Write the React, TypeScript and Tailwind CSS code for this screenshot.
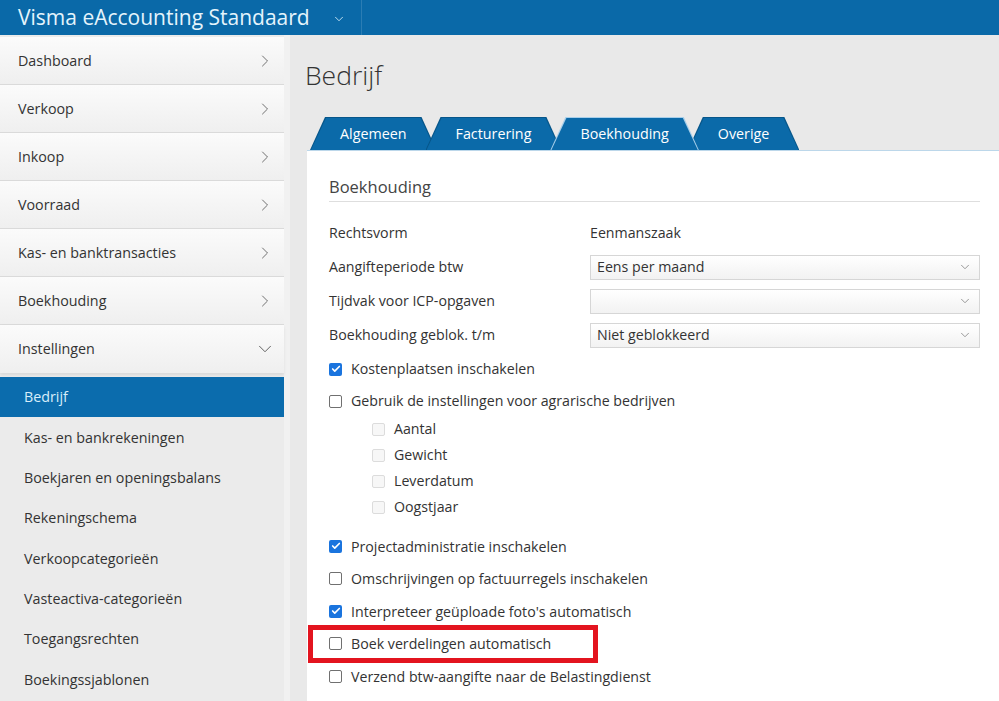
import { Check, ChevronDown, ChevronRight } from "lucide-react";

const topItems = ["Dashboard", "Verkoop", "Inkoop", "Voorraad", "Kas- en banktransacties", "Boekhouding"];

const subItems = [
  "Bedrijf",
  "Kas- en bankrekeningen",
  "Boekjaren en openingsbalans",
  "Rekeningschema",
  "Verkoopcategorieën",
  "Vasteactiva-categorieën",
  "Toegangsrechten",
  "Boekingssjablonen",
];

const tabs = ["Algemeen", "Facturering", "Boekhouding", "Overige"];

const Box = ({ state }: { state: "on" | "off" | "disabled" }) => {
  if (state === "on")
    return (
      <span className="flex h-[13px] w-[13px] items-center justify-center rounded-[2px] bg-[#1a74de]">
        <Check size={10} strokeWidth={4} className="text-white" />
      </span>
    );
  if (state === "disabled")
    return <span className="h-[13px] w-[13px] rounded-[2px] border border-[#dcdcdc] bg-[#f7f7f7]" />;
  return <span className="h-[13px] w-[13px] rounded-[2px] border border-[#707070] bg-white" />;
};

const CheckRow = ({ label, state, sub, h }: { label: string; state: "on" | "off" | "disabled"; sub?: boolean; h: string }) => (
  <div className={`flex items-center ${h} ${sub ? "pl-[43px]" : ""}`}>
    <Box state={state} />
    <span className="ml-[9px]">{label}</span>
  </div>
);

const Select = ({ value }: { value: string }) => (
  <div className="flex h-[25px] flex-1 items-center justify-between border border-[#d6d6d6] bg-gradient-to-b from-white to-[#f2f2f2] pl-[6px] pr-[7px]">
    <span>{value}</span>
    <ChevronDown size={14} strokeWidth={1.5} className="text-[#8a8a8a]" />
  </div>
);

const Tab = ({ label, active }: { label: string; active: boolean }) => (
  <div className={`relative -ml-[11px] flex h-[33px] items-center px-[30px] first:ml-0 ${active ? "z-10" : ""}`}>
    <div
      className={`absolute inset-0 [clip-path:polygon(15px_0,calc(100%_-_15px)_0,100%_100%,0_100%)] ${
        active ? "bg-[#a8cfea]" : "bg-[#07568a]"
      }`}
    />
    <div className="absolute top-[1px] right-[1px] bottom-0 left-[1px] bg-[#0b6aa9] [clip-path:polygon(15px_0,calc(100%_-_15px)_0,100%_100%,0_100%)]" />
    <span className="relative text-[14.3px] text-white">{label}</span>
  </div>
);

export default function App() {
  return (
    <div className="flex h-[701px] w-[999px] flex-col overflow-hidden bg-[#e9e9e9] font-['Open_Sans',sans-serif] text-[#333]">
      <div className="flex h-[35px] shrink-0 bg-[#0a69a8]">
        <div className="flex w-[362px] items-center border-r border-[#2b7db4] pl-[18px]">
          <span className="text-[21px] text-[#e4f4fc]">Visma eAccounting Standaard</span>
          <ChevronDown size={14} strokeWidth={1.5} className="ml-[22px] mt-[2px] text-[#d4ecf8]" />
        </div>
      </div>

      <div className="flex flex-1">
        <aside className="w-[290px] shrink-0 border-r-[6px] border-[#f1f1f1] bg-[#ebebeb] pt-[2px] text-[14.3px]">
          {topItems.map((item) => (
            <div
              key={item}
              className="flex h-[48px] items-center justify-between border-b border-[#dadada] bg-gradient-to-b from-[#fbfbfb] to-[#efefef] pl-[18px] pr-[9px]"
            >
              <span>{item}</span>
              <ChevronRight size={20} strokeWidth={1} className="text-[#555]" />
            </div>
          ))}
          <div className="flex h-[48px] items-center justify-between bg-gradient-to-b from-[#fbfbfb] to-[#efefef] pl-[18px] pr-[8px] shadow-[0_2px_3px_rgba(0,0,0,0.08)]">
            <span>Instellingen</span>
            <ChevronDown size={22} strokeWidth={1} className="text-[#555]" />
          </div>
          <div className="mt-[4px]">
            {subItems.map((item, i) => (
              <div
                key={item}
                className={`flex h-[40.3px] items-center pl-[24px] ${i === 0 ? "bg-[#0b6cad] text-[#d8eefa]" : ""}`}
              >
                {item}
              </div>
            ))}
          </div>
        </aside>

        <main className="flex-1 pl-[17px]">
          <h1 className="mt-[22px] -ml-[2px] text-[26.5px] leading-[36px] font-light text-[#333]">Bedrijf</h1>
          <div className="mt-[24px] flex pl-[3px]">
            {tabs.map((t) => (
              <Tab key={t} label={t} active={t === "Boekhouding"} />
            ))}
          </div>
          <div className="h-[560px] border-t border-[#bcd7ea] bg-white pl-[22px] pr-[19px] text-[14.2px]">
            <div className="border-b border-[#dedede] pt-[24px] pb-[2px] text-[16.5px] leading-[24px] text-[#444]">
              Boekhouding
            </div>
            <div className="mt-[14px] flex h-[34px] items-center">
              <span className="w-[261px]">Rechtsvorm</span>
              <span>Eenmanszaak</span>
            </div>
            <div className="flex h-[34px] items-center">
              <span className="w-[261px]">Aangifteperiode btw</span>
              <Select value="Eens per maand" />
            </div>
            <div className="flex h-[34px] items-center">
              <span className="w-[261px]">Tijdvak voor ICP-opgaven</span>
              <Select value="" />
            </div>
            <div className="flex h-[34px] items-center">
              <span className="w-[261px]">Boekhouding geblok. t/m</span>
              <Select value="Niet geblokkeerd" />
            </div>
            <CheckRow h="h-[34px]" state="on" label="Kostenplaatsen inschakelen" />
            <CheckRow h="h-[30px]" state="off" label="Gebruik de instellingen voor agrarische bedrijven" />
            <CheckRow h="h-[26px]" sub state="disabled" label="Aantal" />
            <CheckRow h="h-[26px]" sub state="disabled" label="Gewicht" />
            <CheckRow h="h-[26px]" sub state="disabled" label="Leverdatum" />
            <CheckRow h="h-[26px]" sub state="disabled" label="Oogstjaar" />
            <div className="h-[10px]" />
            <CheckRow h="h-[32.5px]" state="on" label="Projectadministratie inschakelen" />
            <CheckRow h="h-[32.5px]" state="off" label="Omschrijvingen op factuurregels inschakelen" />
            <CheckRow h="h-[32.5px]" state="on" label="Interpreteer geüploade foto's automatisch" />
            <div className="relative">
              <CheckRow h="h-[32.5px]" state="off" label="Boek verdelingen automatisch" />
              <span className="pointer-events-none absolute -top-[3px] -left-[21px] h-[38px] w-[290px] border-[5px] border-[#e3141f]" />
            </div>
            <CheckRow h="h-[32.5px]" state="off" label="Verzend btw-aangifte naar de Belastingdienst" />
          </div>
        </main>
      </div>
    </div>
  );
}
